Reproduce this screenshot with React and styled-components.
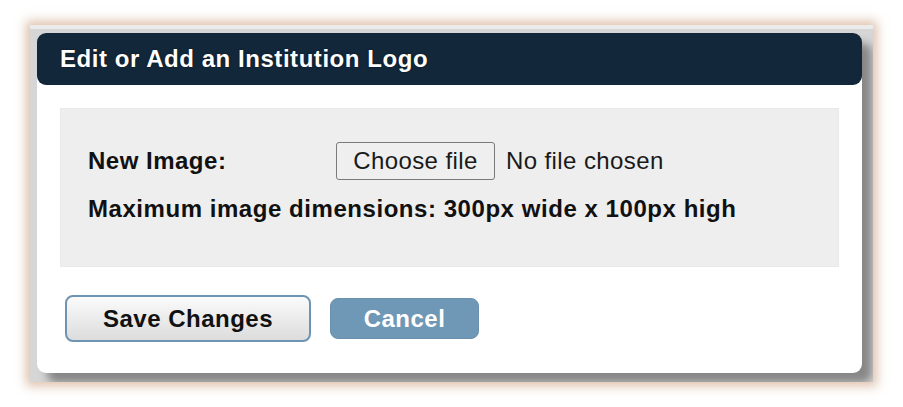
import React from 'react';
import styled, { createGlobalStyle } from 'styled-components';

const GlobalStyle = createGlobalStyle`
    html, body {
        margin: 0;
        padding: 0;
        background: #ffffff;
    }
    body {
        font-family: "Liberation Sans", Arial, sans-serif;
    }
`;

const Page = styled.div`
    width: 903px;
    height: 407px;
    padding: 25px 0 0 30px;
    box-sizing: border-box;
`;

const Frame = styled.div`
    width: 843px;
    height: 357px;
    box-sizing: border-box;
    padding: 4px 0 0 7px;
    background: #d6d6d6;
    border-top: 4px solid #ebebeb;
    overflow: hidden;
    box-shadow: 0 0 10px 4px rgba(200, 150, 115, 0.6);
`;

const Dialog = styled.div`
    width: 825px;
    height: 340px;
    background: #ffffff;
    border-radius: 9px;
    box-shadow: 10px 10px 9px #878787;
    display: flex;
    flex-direction: column;
`;

const Header = styled.div`
    height: 52px;
    flex: none;
    display: flex;
    align-items: center;
    padding: 0 23px;
    background: #13273a;
    border-radius: 9px;
    color: #ffffff;
    font-size: 24px;
    font-weight: bold;
    letter-spacing: 0.55px;
    text-shadow: 0 0 2px rgba(0, 0, 0, 0.6);
`;

const Panel = styled.div`
    margin: 23px 23px 0;
    height: 159px;
    box-sizing: border-box;
    padding: 33px 27px 0;
    background: #eeeeee;
    border: 1px solid #e9e9e9;
    display: flex;
    flex-direction: column;
    gap: 15px;
`;

const Row = styled.div`
    display: flex;
    align-items: center;
    height: 38px;
`;

const Label = styled.div`
    width: 248px;
    font-size: 24px;
    font-weight: bold;
    letter-spacing: 0.5px;
    color: #111111;
`;

const FileButton = styled.div`
    height: 38px;
    width: 159px;
    box-sizing: border-box;
    display: flex;
    align-items: center;
    justify-content: center;
    background: #efefef;
    border: 1px solid #7a7a7a;
    border-radius: 3px;
    font-size: 24px;
    letter-spacing: 0.4px;
    color: #1a1a1a;
`;

const FileName = styled.span`
    margin-left: 11px;
    font-size: 24px;
    letter-spacing: 0.4px;
    color: #1a1a1a;
`;

const Note = styled.div`
    font-size: 24px;
    font-weight: bold;
    letter-spacing: 0.55px;
    color: #111111;
`;

const Actions = styled.div`
    display: flex;
    align-items: center;
    gap: 19px;
    margin: 28px 0 0 28px;
`;

const Button = styled.button`
    font-family: "Liberation Sans", Arial, sans-serif;
    font-size: 24px;
    font-weight: bold;
    letter-spacing: 0.5px;
    box-sizing: border-box;
    border-radius: 8px;
    cursor: pointer;
    padding: 0;
    width: ${p => (p.primary ? '246px' : '149px')};
    height: ${p => (p.primary ? '47px' : '41px')};
    color: ${p => (p.primary ? '#111111' : '#ffffff')};
    background: ${p => (p.primary ? 'linear-gradient(#fbfbfb, #dcdcdc)' : '#6f97b6')};
    border: ${p => (p.primary ? '2px solid #6e94b3' : '1px solid #6a90ae')};
`;

export default function App() {
    return (
        <Page>
            <GlobalStyle />
            <Frame>
                <Dialog>
                    <Header>Edit or Add an Institution Logo</Header>
                    <Panel>
                        <Row>
                            <Label>New Image:</Label>
                            <FileButton>Choose file</FileButton>
                            <FileName>No file chosen</FileName>
                        </Row>
                        <Note>Maximum image dimensions: 300px wide x 100px high</Note>
                    </Panel>
                    <Actions>
                        <Button primary>Save Changes</Button>
                        <Button>Cancel</Button>
                    </Actions>
                </Dialog>
            </Frame>
        </Page>
    );
}
